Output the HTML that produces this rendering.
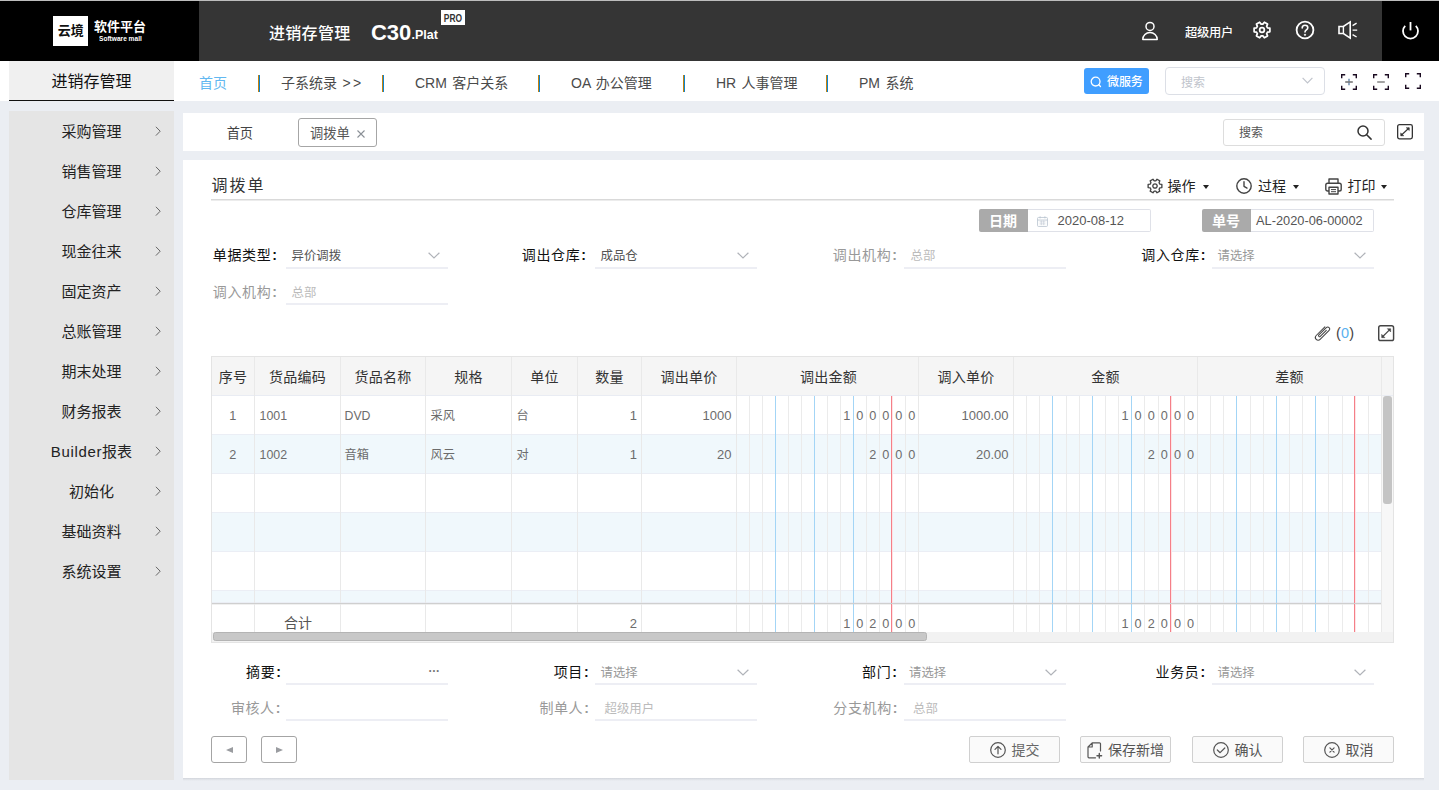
<!DOCTYPE html>
<html lang="zh-CN">
<head>
<meta charset="utf-8">
<title>调拨单</title>
<style>
*{box-sizing:border-box;margin:0;padding:0}
html,body{width:1439px;height:790px;overflow:hidden}
body{background:#ebeef3;font-family:"Liberation Sans","Noto Sans CJK SC",sans-serif;color:#333;position:relative;font-size:13px}
.abs{position:absolute}
.t{position:absolute;white-space:nowrap;line-height:20px;height:20px}
svg{position:absolute;overflow:visible}
/* header */
#hd{position:absolute;left:0;top:0;width:1439px;height:61px;background:#353535}
#hd .logo{position:absolute;left:0;top:0;width:199px;height:61px;background:#000}
#hd .pw{position:absolute;left:1382px;top:0;width:57px;height:61px;background:#000}
/* nav */
#nav{position:absolute;left:0;top:61px;width:1439px;height:40px;background:#fff}
#nav .side{position:absolute;left:9px;top:0;width:165px;height:40px;background:#f0f0f0;border-bottom:1px solid #111}
#nav .it{position:absolute;top:12px;font-size:14px;line-height:20px;color:#4a4a4a;white-space:nowrap;word-spacing:1.500px}
#nav .sp{position:absolute;top:14px;width:2px;height:17px;background:linear-gradient(90deg,#c4820f 50%,#0d84d0 50%)}
/* sidebar */
#sb{position:absolute;left:9px;top:111px;width:165px;height:669px;background:#e5e5e5}
#sb .mi{position:absolute;left:0;width:165px;height:40px;line-height:42px;text-align:center;font-size:15px;color:#222}
#sb .mi svg{left:145.500px;top:14.500px}
/* tab bar */
#tb{position:absolute;left:183px;top:113px;width:1241px;height:38px;background:#fff}
/* panel */
#pn{position:absolute;left:183px;top:160px;width:1241px;height:618px;background:#fff}
#pnsh{position:absolute;left:183px;top:778px;width:1241px;height:3px;background:linear-gradient(#d2d5db,#e3e6eb 60%,#ebeef3)}
</style>
</head>
<body>
<!-- HEADER -->
<div id="hd">
  <div class="logo">
    <div class="abs" style="left:53px;top:16px;width:35px;height:30px;background:#fff"></div>
    <div class="t" style="left:57.700px;top:21.300px;font-size:13px;font-weight:700;color:#111">云境</div>
    <div class="t" style="left:94px;top:17px;font-size:13px;font-weight:700;color:#fff">软件平台</div>
    <div class="t" style="left:98.500px;top:29px;font-size:14px;font-weight:700;color:#fff;transform:scale(.47);transform-origin:0 50%">Software mall</div>
  </div>
  <div class="t" style="left:269px;top:23.500px;font-size:16px;font-weight:500;color:#fff;letter-spacing:.3px">进销存管理</div>
  <div class="t" style="left:371px;top:19.500px;font-size:22px;font-weight:700;color:#fff;line-height:26px;height:26px;letter-spacing:-.1px">C30</div>
  <div class="t" style="left:411.500px;top:25px;font-size:12.500px;font-weight:700;color:#fff">.Plat</div>
  <div class="abs" style="left:441px;top:10px;width:24px;height:15px;background:#fff"></div>
  <div class="t" style="left:435px;top:7.800px;font-size:10.800px;font-weight:700;color:#333;width:36px;text-align:center;transform:scaleX(.78)">PRO</div>
  <svg style="left:1140px;top:20px" width="20" height="22" viewBox="0 0 20 22" fill="none" stroke="#fff" stroke-width="1.500"><circle cx="10" cy="6.400" r="4"/><path d="M2.800 19.400A7.200 7 0 0 1 17.200 19.400Z" stroke-linejoin="round"/></svg>
  <div class="t" style="left:1185px;top:23px;font-size:12.300px;font-weight:500;color:#fff;letter-spacing:-.3px">超级用户</div>
  <svg style="left:1252px;top:20px" width="20" height="20" viewBox="-11.100 -11.100 22.200 22.200" fill="none" stroke="#fff" stroke-width="1.900" stroke-linejoin="round"><path d="M0.96 -6.53 L2.60 -8.62 L6.16 -6.56 L5.17 -4.10 L6.14 -2.43 L8.76 -2.06 L8.76 2.06 L6.14 2.43 L5.17 4.10 L6.16 6.56 L2.60 8.62 L0.96 6.53 L-0.96 6.53 L-2.60 8.62 L-6.16 6.56 L-5.17 4.10 L-6.14 2.43 L-8.76 2.06 L-8.76 -2.06 L-6.14 -2.43 L-5.17 -4.10 L-6.16 -6.56 L-2.60 -8.62 L-0.96 -6.53Z"/><circle cx="0" cy="0" r="2.600"/></svg>
  <svg style="left:1295px;top:20px" width="20" height="20" viewBox="0 0 20 20" fill="none" stroke="#fff" stroke-width="1.800"><circle cx="10" cy="10" r="8.400"/><path d="M7.200 7.900c0-1.700 1.200-2.700 2.800-2.700s2.800 1 2.800 2.500c0 2.100-2.800 2.200-2.800 4.300" stroke-linecap="round" stroke-width="1.600"/><circle cx="10" cy="14.800" r=".7" fill="#fff" stroke-width=".8"/></svg>
  <svg style="left:1337px;top:20px" width="22" height="20" viewBox="0 0 22 20" fill="none" stroke="#fff" stroke-width="1.600" stroke-linejoin="miter"><path d="M2 6.500h4.400l6.800-4.600v16.200l-6.800-4.600H2z"/><path d="M6.400 6.500v7" stroke-width="1.400"/><path d="M15.600 5.600l4-2.400M15.600 10.100h4.600M15.600 14.600l4 2.400" stroke-width="1.400"/></svg>
  <div class="pw">
    <svg style="left:19px;top:20px" width="20" height="21" viewBox="0 0 20 21" fill="none" stroke="#fff" stroke-width="1.800" stroke-linecap="butt"><path d="M9.500 2v8.400"/><path d="M4.200 5.800a7.500 7.500 0 1 0 10.600 0"/></svg>
  </div>
</div>
<div class="abs" style="left:0;top:0;width:1439px;height:1px;background:#bdbdbd"></div>

<!-- TOP NAV -->
<div id="nav">
  <div class="side"><div class="t" style="left:42.500px;top:11px;font-size:16px;color:#111">进销存管理</div></div>
  <div class="it" style="left:199px;color:#62b8f1">首页</div>
  <div class="sp" style="left:258px"></div>
  <div class="it" style="left:281px">子系统录 <span style="letter-spacing:2.500px">&gt;&gt;</span></div>
  <div class="sp" style="left:382px"></div>
  <div class="it" style="left:415px">CRM 客户关系</div>
  <div class="sp" style="left:538px"></div>
  <div class="it" style="left:571px">OA 办公管理</div>
  <div class="sp" style="left:683px"></div>
  <div class="it" style="left:716px">HR 人事管理</div>
  <div class="sp" style="left:826px"></div>
  <div class="it" style="left:859px">PM 系统</div>
  <!-- micro service button -->
  <div class="abs" style="left:1084px;top:7px;width:65px;height:26px;background:#409eff;border-radius:3px"></div>
  <svg style="left:1090px;top:14.500px" width="13" height="13" viewBox="0 0 13 13" fill="none" stroke="#fff" stroke-width="1.300"><circle cx="5.600" cy="5.600" r="4.400"/><path d="M8.800 8.800l1.700 1.700" stroke-linecap="round"/></svg>
  <div class="t" style="left:1107px;top:11px;font-size:12px;font-weight:500;color:#fff;letter-spacing:-.1px">微服务</div>
  <!-- select -->
  <div class="abs" style="left:1165px;top:6px;width:160px;height:28px;border:1px solid #dcdfe6;border-radius:4px;background:#fff"></div>
  <div class="t" style="left:1181px;top:11.500px;font-size:12px;color:#c0c4cc">搜索</div>
  <svg style="left:1302px;top:16px" width="11" height="7" viewBox="0 0 11 7" fill="none" stroke="#c0c4cc" stroke-width="1.200"><path d="M.6.800l4.900 5 4.900-5"/></svg>
  <!-- 3 frame icons -->
  <svg style="left:1341px;top:12.700px" width="16" height="16" viewBox="0 0 16 16" fill="none" stroke="#1a0a20" stroke-width="1.400"><path d="M.7 4.200V.7H4.200M11.800 .7h3.500V4.200M15.300 11.800v3.500H11.800M4.200 15.300H.7V11.800"/><path d="M8 4.800v6.400" stroke="#5b7ea6" stroke-width="1.300"/><path d="M4.200 8h7.600" stroke="#777" stroke-width="1.600"/></svg>
  <svg style="left:1373px;top:12.700px" width="16" height="16" viewBox="0 0 16 16" fill="none" stroke="#1a0a20" stroke-width="1.400"><path d="M.7 4.200V.7H4.200M11.800 .7h3.500V4.200M15.300 11.800v3.500H11.800M4.200 15.300H.7V11.800"/><path d="M4.200 8h7.600" stroke="#999" stroke-width="1.800"/></svg>
  <svg style="left:1405px;top:12px" width="16" height="16" viewBox="0 0 16 16" fill="none" stroke="#1a0a20" stroke-width="1.400"><path d="M.7 4.200V.7H4.200M11.800 .7h3.500V4.200M15.300 11.800v3.500H11.800M4.200 15.300H.7V11.800"/></svg>
</div>

<!-- SIDEBAR -->
<div id="sb">
  <div class="mi" style="top:0">采购管理<svg width="7" height="11" viewBox="0 0 7 11" fill="none" stroke="#666" stroke-width="1"><path d="M.9 .8l4.300 4.400L.9 9.600"/></svg></div>
  <div class="mi" style="top:40px">销售管理<svg width="7" height="11" viewBox="0 0 7 11" fill="none" stroke="#666" stroke-width="1"><path d="M.9 .8l4.300 4.400L.9 9.600"/></svg></div>
  <div class="mi" style="top:80px">仓库管理<svg width="7" height="11" viewBox="0 0 7 11" fill="none" stroke="#666" stroke-width="1"><path d="M.9 .8l4.300 4.400L.9 9.600"/></svg></div>
  <div class="mi" style="top:120px">现金往来<svg width="7" height="11" viewBox="0 0 7 11" fill="none" stroke="#666" stroke-width="1"><path d="M.9 .8l4.300 4.400L.9 9.600"/></svg></div>
  <div class="mi" style="top:160px">固定资产<svg width="7" height="11" viewBox="0 0 7 11" fill="none" stroke="#666" stroke-width="1"><path d="M.9 .8l4.300 4.400L.9 9.600"/></svg></div>
  <div class="mi" style="top:200px">总账管理<svg width="7" height="11" viewBox="0 0 7 11" fill="none" stroke="#666" stroke-width="1"><path d="M.9 .8l4.300 4.400L.9 9.600"/></svg></div>
  <div class="mi" style="top:240px">期末处理<svg width="7" height="11" viewBox="0 0 7 11" fill="none" stroke="#666" stroke-width="1"><path d="M.9 .8l4.300 4.400L.9 9.600"/></svg></div>
  <div class="mi" style="top:280px">财务报表<svg width="7" height="11" viewBox="0 0 7 11" fill="none" stroke="#666" stroke-width="1"><path d="M.9 .8l4.300 4.400L.9 9.600"/></svg></div>
  <div class="mi" style="top:320px"><span style="letter-spacing:.65px">Builder</span>报表<svg width="7" height="11" viewBox="0 0 7 11" fill="none" stroke="#666" stroke-width="1"><path d="M.9 .8l4.300 4.400L.9 9.600"/></svg></div>
  <div class="mi" style="top:360px">初始化<svg width="7" height="11" viewBox="0 0 7 11" fill="none" stroke="#666" stroke-width="1"><path d="M.9 .8l4.300 4.400L.9 9.600"/></svg></div>
  <div class="mi" style="top:400px">基础资料<svg width="7" height="11" viewBox="0 0 7 11" fill="none" stroke="#666" stroke-width="1"><path d="M.9 .8l4.300 4.400L.9 9.600"/></svg></div>
  <div class="mi" style="top:440px">系统设置<svg width="7" height="11" viewBox="0 0 7 11" fill="none" stroke="#666" stroke-width="1"><path d="M.9 .8l4.300 4.400L.9 9.600"/></svg></div>
</div>

<!-- TAB BAR -->
<div id="tb">
  <div class="t" style="left:43.700px;top:10.700px;font-size:13.200px;color:#444">首页</div>
  <div class="abs" style="left:115px;top:5px;width:79px;height:29px;border:1px solid #a6a6a6;border-radius:3px;background:#fff"></div>
  <div class="t" style="left:127px;top:10.600px;font-size:13.300px;color:#555">调拨单</div>
  <svg style="left:174px;top:17px" width="8" height="8" viewBox="0 0 8 8" fill="none" stroke="#8a8f96" stroke-width="1.100"><path d="M.5.500l7 7M7.500.500l-7 7"/></svg>
  <div class="abs" style="left:1040px;top:6px;width:162px;height:27px;border:1px solid #ddd;border-radius:3px;background:#fff"></div>
  <div class="t" style="left:1056px;top:10px;font-size:12px;color:#555">搜索</div>
  <svg style="left:1174px;top:11.800px" width="15" height="15" viewBox="0 0 15 15" fill="none" stroke="#333" stroke-width="1.500"><circle cx="6" cy="6" r="5"/><path d="M9.700 9.700l4.400 4.400" stroke-linecap="round"/></svg>
  <svg style="left:1214px;top:11.200px" width="16" height="15.500" viewBox="0 0 16 15.500" fill="none" stroke="#333" stroke-width="1.300"><rect x=".65" y=".65" width="14.700" height="14.200" rx="1.800"/><path d="M4 11.500l8-7.500" stroke-width="1.100"/><path d="M9.200 3.700h3.100v2.900zM6.800 11.800H3.700V8.900z" fill="#333" stroke-width=".5"/></svg>
</div>

<!-- PANEL -->
<div id="pnsh"></div>
<div id="pn">
<div class="t" style="top:16px;font-size:16px;color:#333;left:28.5px;letter-spacing:2px;">调拨单</div>
<div class="abs" style="left:28px;top:39px;width:1183px;height:1px;background:#d9d9d9"></div>
<div class="abs" style="left:28px;top:40px;width:1183px;height:1px;background:#ececec"></div>
<svg style="left:964px;top:17.8px" width="16" height="16" viewBox="-10.200 -10.200 20.400 20.400" fill="none" stroke="#444" stroke-width="1.700" stroke-linejoin="round"><path d="M0.96 -6.53 L2.60 -8.62 L6.16 -6.56 L5.17 -4.10 L6.14 -2.43 L8.76 -2.06 L8.76 2.06 L6.14 2.43 L5.17 4.10 L6.16 6.56 L2.60 8.62 L0.96 6.53 L-0.96 6.53 L-2.60 8.62 L-6.16 6.56 L-5.17 4.10 L-6.14 2.43 L-8.76 2.06 L-8.76 -2.06 L-6.14 -2.43 L-5.17 -4.10 L-6.16 -6.56 L-2.60 -8.62 L-0.96 -6.53Z"/><circle cx="0" cy="0" r="2.800"/></svg>
<div class="t" style="top:16px;font-size:14px;color:#222;left:984.5px;">操作</div>
<div class="abs" style="left:1019.5px;top:24.5px;border:3.500px solid transparent;border-top:4.500px solid #222;border-bottom:0;width:0;height:0"></div>
<svg style="left:1052.8px;top:17.8px" width="16" height="16" viewBox="0 0 16 16" fill="none" stroke="#444" stroke-width="1.400"><circle cx="8" cy="8" r="7.200"/><path d="M8 3.800V8.300l3 1.800" stroke-linecap="round" stroke-linejoin="round"/></svg>
<div class="t" style="top:16px;font-size:14px;color:#222;left:1075px;">过程</div>
<div class="abs" style="left:1109.5px;top:24.5px;border:3.500px solid transparent;border-top:4.500px solid #222;border-bottom:0;width:0;height:0"></div>
<svg style="left:1141.5px;top:17.8px" width="17" height="17" viewBox="0 0 17 17" fill="none" stroke="#444" stroke-width="1.400" stroke-linejoin="round"><path d="M4 5.200V1h9V5.200"/><rect x=".8" y="5.200" width="15.400" height="7.800" rx="1.800"/><rect x="4" y="9.200" width="9" height="6.800" fill="#fff"/><path d="M6 11.600h5M6 13.700h5" stroke-width="1"/></svg>
<div class="t" style="top:16px;font-size:14px;color:#222;left:1164.5px;">打印</div>
<div class="abs" style="left:1198px;top:24.5px;border:3.500px solid transparent;border-top:4.500px solid #222;border-bottom:0;width:0;height:0"></div>
<div class="abs" style="left:796px;top:49px;width:49px;height:23px;background:#aaa;border-radius:2px 0 0 2px"></div>
<div class="t" style="top:50.5px;font-size:14px;color:#fff;font-weight:700;left:670px;width:300px;text-align:center;">日期</div>
<div class="abs" style="left:845px;top:49px;width:123px;height:23px;border:1px solid #dfe1e8;border-left:0;background:#fff;border-radius:0 2px 2px 0"></div>
<svg style="left:854px;top:55.5px" width="11" height="11" viewBox="0 0 12 12" fill="none" stroke="#b9c3d0" stroke-width=".9"><rect x=".6" y="1.600" width="10.800" height="9.800" rx="1"/><path d="M.6 4.400h10.800M3.400.4v2.200M8.600.4v2.200" /><path d="M2.800 6.400h6.400M2.800 8.600h6.400M4.700 5v5M7.300 5v5" stroke-width=".6"/></svg>
<div class="t" style="top:51.2px;font-size:13px;color:#555;left:874.5px;">2020-08-12</div>
<div class="abs" style="left:1019px;top:49px;width:49px;height:23px;background:#aaa;border-radius:2px 0 0 2px"></div>
<div class="t" style="top:50.5px;font-size:14px;color:#fff;font-weight:700;left:893px;width:300px;text-align:center;">单号</div>
<div class="abs" style="left:1068px;top:49px;width:123px;height:23px;border:1px solid #dfe1e8;border-left:0;background:#fff;border-radius:0 2px 2px 0"></div>
<div class="t" style="top:51.2px;font-size:12.8px;color:#555;left:1073px;">AL-2020-06-00002</div>
<div class="t" style="top:85px;font-size:14px;color:#111;left:-205.5px;width:300px;text-align:right;letter-spacing:.6px;">单据类型<span style="margin-left:1px;font-weight:700">:</span></div>
<div class="abs" style="left:103px;top:107px;width:162px;height:2px;background:#edeef4"></div>
<div class="t" style="top:86px;font-size:12.4px;color:#555;left:108.5px;">异价调拨</div>
<svg style="left:244.5px;top:92px" width="12" height="7" viewBox="0 0 12 7" fill="none" stroke="#b0b3b9" stroke-width="1.200"><path d="M.6.700l5.400 5.300 5.400-5.300"/></svg>
<div class="t" style="top:85px;font-size:14px;color:#111;left:103.5px;width:300px;text-align:right;letter-spacing:.6px;">调出仓库<span style="margin-left:1px;font-weight:700">:</span></div>
<div class="abs" style="left:412px;top:107px;width:162px;height:2px;background:#edeef4"></div>
<div class="t" style="top:86px;font-size:12.4px;color:#555;left:417.5px;">成品仓</div>
<svg style="left:553.5px;top:92px" width="12" height="7" viewBox="0 0 12 7" fill="none" stroke="#b0b3b9" stroke-width="1.200"><path d="M.6.700l5.400 5.300 5.400-5.300"/></svg>
<div class="t" style="top:85px;font-size:14px;color:#999;left:414.5px;width:300px;text-align:right;letter-spacing:.6px;">调出机构<span style="margin-left:1px;font-weight:700">:</span></div>
<div class="abs" style="left:720.5px;top:107px;width:162px;height:2px;background:#edeef4"></div>
<div class="t" style="top:86px;font-size:12.4px;color:#bbb;left:727.5px;">总部</div>
<div class="t" style="top:85px;font-size:14px;color:#111;left:723.0px;width:300px;text-align:right;letter-spacing:.6px;">调入仓库<span style="margin-left:1px;font-weight:700">:</span></div>
<div class="abs" style="left:1029px;top:107px;width:162px;height:2px;background:#edeef4"></div>
<div class="t" style="top:86px;font-size:12.4px;color:#999;left:1034.5px;">请选择</div>
<svg style="left:1170.5px;top:92px" width="12" height="7" viewBox="0 0 12 7" fill="none" stroke="#b0b3b9" stroke-width="1.200"><path d="M.6.700l5.400 5.300 5.400-5.300"/></svg>
<div class="t" style="top:122px;font-size:14px;color:#999;left:-205.5px;width:300px;text-align:right;letter-spacing:.6px;">调入机构<span style="margin-left:1px;font-weight:700">:</span></div>
<div class="abs" style="left:103px;top:143px;width:162px;height:2px;background:#edeef4"></div>
<div class="t" style="top:123px;font-size:12.4px;color:#bbb;left:108.5px;">总部</div>
<svg style="left:1130px;top:164px" width="19" height="19" viewBox="0 0 19 19" fill="none" stroke="#444" stroke-width="1.050"><g transform="translate(9.400 9.200) rotate(-45) translate(-9.250 -3.250)"><path d="M15.500 .5H3.250A2.750 2.750 0 0 0 3.250 6H16A2 2 0 0 0 16 2H5.500A1 1 0 0 0 5.500 4H14" stroke-linecap="round"/></g></svg>
<div class="t" style="top:162.5px;font-size:14.5px;color:#444;left:1153px;letter-spacing:.2px;">(<span style="color:#5ab1ef">0</span>)</div>
<svg style="left:1194.7px;top:165.2px" width="16.3" height="16.3" viewBox="0 0 17 17" fill="none" stroke="#444" stroke-width="1.500"><rect x=".75" y=".75" width="15.500" height="15.500" rx="2"/><path d="M4.500 12.500l8-8" stroke-width="1.200"/><path d="M9.700 3.800h3.500v3.500zM7.300 13.200H3.800V9.700z" fill="#444" stroke-width=".5"/></svg>
<div class="abs" style="left:28px;top:196px;width:1183px;height:287px;border:1px solid #e4e4e4;background:#fff"></div>
<div class="abs" style="left:29px;top:197px;width:1181px;height:39px;background:#f5f5f5"></div>
<div class="abs" style="left:29px;top:236px;width:1169px;height:39px;background:#fff;border-bottom:1px solid #ebeef5"></div>
<div class="abs" style="left:29px;top:275px;width:1169px;height:39px;background:#f0f8fc;border-bottom:1px solid #ebeef5"></div>
<div class="abs" style="left:29px;top:314px;width:1169px;height:39px;background:#fff;border-bottom:1px solid #ebeef5"></div>
<div class="abs" style="left:29px;top:353px;width:1169px;height:39px;background:#f0f8fc;border-bottom:1px solid #ebeef5"></div>
<div class="abs" style="left:29px;top:392px;width:1169px;height:39px;background:#fff;border-bottom:1px solid #ebeef5"></div>
<div class="abs" style="left:29px;top:431px;width:1169px;height:12px;background:#f0f8fc;border-bottom:1px solid #ebeef5"></div>
<div class="abs" style="left:29px;top:235px;width:1181px;height:1px;background:#e9ecf3"></div>
<div class="abs" style="left:1199px;top:236px;width:11px;height:236px;background:#f7f7f7"></div>
<div class="abs" style="left:1200.3px;top:236.3px;width:9px;height:108px;background:#c4c4c4;border-radius:3px"></div>
<div class="abs" style="left:29px;top:443px;width:1169px;height:2px;background:#f0f0f0"></div>
<div class="abs" style="left:29px;top:445px;width:1169px;height:27px;background:#fff"></div>
<div class="abs" style="left:71px;top:197px;width:1px;height:275px;background:#e9e9e9"></div>
<div class="abs" style="left:157px;top:197px;width:1px;height:275px;background:#e9e9e9"></div>
<div class="abs" style="left:242px;top:197px;width:1px;height:275px;background:#e9e9e9"></div>
<div class="abs" style="left:328px;top:197px;width:1px;height:275px;background:#e9e9e9"></div>
<div class="abs" style="left:394px;top:197px;width:1px;height:275px;background:#e9e9e9"></div>
<div class="abs" style="left:458px;top:197px;width:1px;height:275px;background:#e9e9e9"></div>
<div class="abs" style="left:553px;top:197px;width:1px;height:275px;background:#e9e9e9"></div>
<div class="abs" style="left:735px;top:197px;width:1px;height:275px;background:#e9e9e9"></div>
<div class="abs" style="left:830px;top:197px;width:1px;height:275px;background:#e9e9e9"></div>
<div class="abs" style="left:1014px;top:197px;width:1px;height:275px;background:#e9e9e9"></div>
<div class="abs" style="left:1198px;top:197px;width:1px;height:275px;background:#e9e9e9"></div>
<div class="abs" style="left:566px;top:236px;width:1px;height:236px;background:#ebebeb"></div>
<div class="abs" style="left:579px;top:236px;width:1px;height:236px;background:#ebebeb"></div>
<div class="abs" style="left:592px;top:236px;width:1px;height:236px;background:#a3d5f6"></div>
<div class="abs" style="left:605px;top:236px;width:1px;height:236px;background:#ebebeb"></div>
<div class="abs" style="left:618px;top:236px;width:1px;height:236px;background:#ebebeb"></div>
<div class="abs" style="left:631px;top:236px;width:1px;height:236px;background:#a3d5f6"></div>
<div class="abs" style="left:644px;top:236px;width:1px;height:236px;background:#ebebeb"></div>
<div class="abs" style="left:657px;top:236px;width:1px;height:236px;background:#ebebeb"></div>
<div class="abs" style="left:670px;top:236px;width:1px;height:236px;background:#a3d5f6"></div>
<div class="abs" style="left:683px;top:236px;width:1px;height:236px;background:#ebebeb"></div>
<div class="abs" style="left:696px;top:236px;width:1px;height:236px;background:#ebebeb"></div>
<div class="abs" style="left:708px;top:236px;width:1px;height:236px;background:#f57f88"></div>
<div class="abs" style="left:709px;top:236px;width:1px;height:236px;background:#fde4e6"></div>
<div class="abs" style="left:722px;top:236px;width:1px;height:236px;background:#ebebeb"></div>
<div class="abs" style="left:843px;top:236px;width:1px;height:236px;background:#ebebeb"></div>
<div class="abs" style="left:856px;top:236px;width:1px;height:236px;background:#ebebeb"></div>
<div class="abs" style="left:869px;top:236px;width:1px;height:236px;background:#a3d5f6"></div>
<div class="abs" style="left:883px;top:236px;width:1px;height:236px;background:#ebebeb"></div>
<div class="abs" style="left:896px;top:236px;width:1px;height:236px;background:#ebebeb"></div>
<div class="abs" style="left:909px;top:236px;width:1px;height:236px;background:#a3d5f6"></div>
<div class="abs" style="left:922px;top:236px;width:1px;height:236px;background:#ebebeb"></div>
<div class="abs" style="left:935px;top:236px;width:1px;height:236px;background:#ebebeb"></div>
<div class="abs" style="left:948px;top:236px;width:1px;height:236px;background:#a3d5f6"></div>
<div class="abs" style="left:961px;top:236px;width:1px;height:236px;background:#ebebeb"></div>
<div class="abs" style="left:975px;top:236px;width:1px;height:236px;background:#ebebeb"></div>
<div class="abs" style="left:987px;top:236px;width:1px;height:236px;background:#f57f88"></div>
<div class="abs" style="left:988px;top:236px;width:1px;height:236px;background:#fde4e6"></div>
<div class="abs" style="left:1001px;top:236px;width:1px;height:236px;background:#ebebeb"></div>
<div class="abs" style="left:1027px;top:236px;width:1px;height:236px;background:#ebebeb"></div>
<div class="abs" style="left:1040px;top:236px;width:1px;height:236px;background:#ebebeb"></div>
<div class="abs" style="left:1053px;top:236px;width:1px;height:236px;background:#a3d5f6"></div>
<div class="abs" style="left:1067px;top:236px;width:1px;height:236px;background:#ebebeb"></div>
<div class="abs" style="left:1080px;top:236px;width:1px;height:236px;background:#ebebeb"></div>
<div class="abs" style="left:1093px;top:236px;width:1px;height:236px;background:#a3d5f6"></div>
<div class="abs" style="left:1106px;top:236px;width:1px;height:236px;background:#ebebeb"></div>
<div class="abs" style="left:1119px;top:236px;width:1px;height:236px;background:#ebebeb"></div>
<div class="abs" style="left:1132px;top:236px;width:1px;height:236px;background:#a3d5f6"></div>
<div class="abs" style="left:1145px;top:236px;width:1px;height:236px;background:#ebebeb"></div>
<div class="abs" style="left:1159px;top:236px;width:1px;height:236px;background:#ebebeb"></div>
<div class="abs" style="left:1171px;top:236px;width:1px;height:236px;background:#f57f88"></div>
<div class="abs" style="left:1172px;top:236px;width:1px;height:236px;background:#fde4e6"></div>
<div class="abs" style="left:1185px;top:236px;width:1px;height:236px;background:#ebebeb"></div>
<div class="abs" style="left:29px;top:443px;width:1169px;height:1px;background:#cfcfcf"></div>
<div class="t" style="top:207px;font-size:14px;color:#333;left:-100.0px;width:300px;text-align:center;letter-spacing:.3px;">序号</div>
<div class="t" style="top:207px;font-size:14px;color:#333;left:-35.5px;width:300px;text-align:center;letter-spacing:.3px;">货品编码</div>
<div class="t" style="top:207px;font-size:14px;color:#333;left:50.0px;width:300px;text-align:center;letter-spacing:.3px;">货品名称</div>
<div class="t" style="top:207px;font-size:14px;color:#333;left:135.5px;width:300px;text-align:center;letter-spacing:.3px;">规格</div>
<div class="t" style="top:207px;font-size:14px;color:#333;left:211.5px;width:300px;text-align:center;letter-spacing:.3px;">单位</div>
<div class="t" style="top:207px;font-size:14px;color:#333;left:276.5px;width:300px;text-align:center;letter-spacing:.3px;">数量</div>
<div class="t" style="top:207px;font-size:14px;color:#333;left:356.0px;width:300px;text-align:center;letter-spacing:.3px;">调出单价</div>
<div class="t" style="top:207px;font-size:14px;color:#333;left:495.5px;width:300px;text-align:center;letter-spacing:.3px;">调出金额</div>
<div class="t" style="top:207px;font-size:14px;color:#333;left:633.0px;width:300px;text-align:center;letter-spacing:.3px;">调入单价</div>
<div class="t" style="top:207px;font-size:14px;color:#333;left:772.5px;width:300px;text-align:center;letter-spacing:.3px;">金额</div>
<div class="t" style="top:207px;font-size:14px;color:#333;left:956.5px;width:300px;text-align:center;letter-spacing:.3px;">差额</div>
<div class="t" style="top:246px;font-size:12.7px;color:#6c6c6c;left:-100.3px;width:300px;text-align:center;">1</div>
<div class="t" style="top:246px;font-size:12.4px;color:#6c6c6c;left:76.5px;">1001</div>
<div class="t" style="top:246px;font-size:12.3px;color:#6c6c6c;left:161.5px;">DVD</div>
<div class="t" style="top:246px;font-size:12.2px;color:#6c6c6c;left:247.5px;">采风</div>
<div class="t" style="top:246px;font-size:12.2px;color:#6c6c6c;left:333.5px;">台</div>
<div class="t" style="top:246px;font-size:13px;color:#6c6c6c;left:154px;width:300px;text-align:right;">1</div>
<div class="t" style="top:246px;font-size:13px;color:#6c6c6c;left:248.5px;width:300px;text-align:right;">1000</div>
<div class="t" style="top:246px;font-size:12.7px;color:#6c6c6c;left:513.7px;width:300px;text-align:center;">1</div>
<div class="t" style="top:246px;font-size:12.7px;color:#6c6c6c;left:526.7px;width:300px;text-align:center;">0</div>
<div class="t" style="top:246px;font-size:12.7px;color:#6c6c6c;left:539.7px;width:300px;text-align:center;">0</div>
<div class="t" style="top:246px;font-size:12.7px;color:#6c6c6c;left:552.7px;width:300px;text-align:center;">0</div>
<div class="t" style="top:246px;font-size:12.7px;color:#6c6c6c;left:565.7px;width:300px;text-align:center;">0</div>
<div class="t" style="top:246px;font-size:12.7px;color:#6c6c6c;left:578.7px;width:300px;text-align:center;">0</div>
<div class="t" style="top:246px;font-size:13px;color:#6c6c6c;left:525.5px;width:300px;text-align:right;">1000.00</div>
<div class="t" style="top:246px;font-size:12.7px;color:#6c6c6c;left:791.92px;width:300px;text-align:center;">1</div>
<div class="t" style="top:246px;font-size:12.7px;color:#6c6c6c;left:805.06px;width:300px;text-align:center;">0</div>
<div class="t" style="top:246px;font-size:12.7px;color:#6c6c6c;left:818.2px;width:300px;text-align:center;">0</div>
<div class="t" style="top:246px;font-size:12.7px;color:#6c6c6c;left:831.34px;width:300px;text-align:center;">0</div>
<div class="t" style="top:246px;font-size:12.7px;color:#6c6c6c;left:844.49px;width:300px;text-align:center;">0</div>
<div class="t" style="top:246px;font-size:12.7px;color:#6c6c6c;left:857.63px;width:300px;text-align:center;">0</div>
<div class="t" style="top:285px;font-size:12.7px;color:#6c6c6c;left:-100.3px;width:300px;text-align:center;">2</div>
<div class="t" style="top:285px;font-size:12.4px;color:#6c6c6c;left:76.5px;">1002</div>
<div class="t" style="top:285px;font-size:12.2px;color:#6c6c6c;left:161.5px;">音箱</div>
<div class="t" style="top:285px;font-size:12.2px;color:#6c6c6c;left:247.5px;">风云</div>
<div class="t" style="top:285px;font-size:12.2px;color:#6c6c6c;left:333.5px;">对</div>
<div class="t" style="top:285px;font-size:13px;color:#6c6c6c;left:154px;width:300px;text-align:right;">1</div>
<div class="t" style="top:285px;font-size:13px;color:#6c6c6c;left:248.5px;width:300px;text-align:right;">20</div>
<div class="t" style="top:285px;font-size:12.7px;color:#6c6c6c;left:539.7px;width:300px;text-align:center;">2</div>
<div class="t" style="top:285px;font-size:12.7px;color:#6c6c6c;left:552.7px;width:300px;text-align:center;">0</div>
<div class="t" style="top:285px;font-size:12.7px;color:#6c6c6c;left:565.7px;width:300px;text-align:center;">0</div>
<div class="t" style="top:285px;font-size:12.7px;color:#6c6c6c;left:578.7px;width:300px;text-align:center;">0</div>
<div class="t" style="top:285px;font-size:13px;color:#6c6c6c;left:525.5px;width:300px;text-align:right;">20.00</div>
<div class="t" style="top:285px;font-size:12.7px;color:#6c6c6c;left:818.2px;width:300px;text-align:center;">2</div>
<div class="t" style="top:285px;font-size:12.7px;color:#6c6c6c;left:831.34px;width:300px;text-align:center;">0</div>
<div class="t" style="top:285px;font-size:12.7px;color:#6c6c6c;left:844.49px;width:300px;text-align:center;">0</div>
<div class="t" style="top:285px;font-size:12.7px;color:#6c6c6c;left:857.63px;width:300px;text-align:center;">0</div>
<div class="t" style="top:453px;font-size:14px;color:#555;left:-35px;width:300px;text-align:center;">合计</div>
<div class="t" style="top:454px;font-size:13px;color:#6c6c6c;left:154px;width:300px;text-align:right;">2</div>
<div class="t" style="top:454px;font-size:12.7px;color:#6c6c6c;left:513.7px;width:300px;text-align:center;">1</div>
<div class="t" style="top:454px;font-size:12.7px;color:#6c6c6c;left:526.7px;width:300px;text-align:center;">0</div>
<div class="t" style="top:454px;font-size:12.7px;color:#6c6c6c;left:539.7px;width:300px;text-align:center;">2</div>
<div class="t" style="top:454px;font-size:12.7px;color:#6c6c6c;left:552.7px;width:300px;text-align:center;">0</div>
<div class="t" style="top:454px;font-size:12.7px;color:#6c6c6c;left:565.7px;width:300px;text-align:center;">0</div>
<div class="t" style="top:454px;font-size:12.7px;color:#6c6c6c;left:578.7px;width:300px;text-align:center;">0</div>
<div class="t" style="top:454px;font-size:12.7px;color:#6c6c6c;left:791.92px;width:300px;text-align:center;">1</div>
<div class="t" style="top:454px;font-size:12.7px;color:#6c6c6c;left:805.06px;width:300px;text-align:center;">0</div>
<div class="t" style="top:454px;font-size:12.7px;color:#6c6c6c;left:818.2px;width:300px;text-align:center;">2</div>
<div class="t" style="top:454px;font-size:12.7px;color:#6c6c6c;left:831.34px;width:300px;text-align:center;">0</div>
<div class="t" style="top:454px;font-size:12.7px;color:#6c6c6c;left:844.49px;width:300px;text-align:center;">0</div>
<div class="t" style="top:454px;font-size:12.7px;color:#6c6c6c;left:857.63px;width:300px;text-align:center;">0</div>
<div class="abs" style="left:29px;top:472px;width:1181px;height:10px;background:#f2f2f2"></div>
<div class="abs" style="left:30px;top:472px;width:714px;height:9px;background:#c8c8c8;border:1px solid #b4b4b4;border-radius:2.500px"></div>
<div class="t" style="top:501.5px;font-size:14px;color:#111;left:-201.5px;width:300px;text-align:right;letter-spacing:.6px;">摘要<span style="margin-left:1px;font-weight:700">:</span></div>
<div class="abs" style="left:103px;top:523px;width:162px;height:2px;background:#edeef4"></div>
<div class="t" style="top:500.5px;font-size:12px;color:#777;font-weight:700;left:245.5px;letter-spacing:-.3px;">···</div>
<div class="t" style="top:501.5px;font-size:14px;color:#111;left:106.2px;width:300px;text-align:right;letter-spacing:.6px;">项目<span style="margin-left:1px;font-weight:700">:</span></div>
<div class="abs" style="left:412px;top:523px;width:162px;height:2px;background:#edeef4"></div>
<div class="t" style="top:502.5px;font-size:12.4px;color:#999;left:417.5px;">请选择</div>
<svg style="left:553.5px;top:508.5px" width="12" height="7" viewBox="0 0 12 7" fill="none" stroke="#b0b3b9" stroke-width="1.200"><path d="M.6.700l5.400 5.300 5.400-5.300"/></svg>
<div class="t" style="top:501.5px;font-size:14px;color:#111;left:414.5px;width:300px;text-align:right;letter-spacing:.6px;">部门<span style="margin-left:1px;font-weight:700">:</span></div>
<div class="abs" style="left:720.5px;top:523px;width:162px;height:2px;background:#edeef4"></div>
<div class="t" style="top:502.5px;font-size:12.4px;color:#999;left:726.0px;">请选择</div>
<svg style="left:862.0px;top:508.5px" width="12" height="7" viewBox="0 0 12 7" fill="none" stroke="#b0b3b9" stroke-width="1.200"><path d="M.6.700l5.400 5.300 5.400-5.300"/></svg>
<div class="t" style="top:501.5px;font-size:14px;color:#111;left:722.7px;width:300px;text-align:right;letter-spacing:.6px;">业务员<span style="margin-left:1px;font-weight:700">:</span></div>
<div class="abs" style="left:1029px;top:523px;width:162px;height:2px;background:#edeef4"></div>
<div class="t" style="top:502.5px;font-size:12.4px;color:#999;left:1034.5px;">请选择</div>
<svg style="left:1170.5px;top:508.5px" width="12" height="7" viewBox="0 0 12 7" fill="none" stroke="#b0b3b9" stroke-width="1.200"><path d="M.6.700l5.400 5.300 5.400-5.300"/></svg>
<div class="t" style="top:538px;font-size:14px;color:#999;left:-202.0px;width:300px;text-align:right;letter-spacing:.6px;">审核人<span style="margin-left:1px;font-weight:700">:</span></div>
<div class="abs" style="left:103px;top:559px;width:162px;height:2px;background:#edeef4"></div>
<div class="t" style="top:538px;font-size:14px;color:#999;left:106.5px;width:300px;text-align:right;letter-spacing:.6px;">制单人<span style="margin-left:1px;font-weight:700">:</span></div>
<div class="abs" style="left:412px;top:559px;width:162px;height:2px;background:#edeef4"></div>
<div class="t" style="top:539px;font-size:12.4px;color:#bbb;left:421.5px;">超级用户</div>
<div class="t" style="top:538px;font-size:14px;color:#999;left:415.0px;width:300px;text-align:right;letter-spacing:.6px;">分支机构<span style="margin-left:1px;font-weight:700">:</span></div>
<div class="abs" style="left:720.5px;top:559px;width:162px;height:2px;background:#edeef4"></div>
<div class="t" style="top:539px;font-size:12.4px;color:#bbb;left:730.0px;">总部</div>
<div class="abs" style="left:28px;top:576px;width:36px;height:27px;border:1px solid #a4a4a4;border-radius:3px;background:#fff"></div>
<div class="abs" style="left:43.3px;top:586.6px;border:3.800px solid transparent;border-right:7.200px solid #9a9ca0;border-left:0;width:0;height:0"></div>
<div class="abs" style="left:78px;top:576px;width:36px;height:27px;border:1px solid #a4a4a4;border-radius:3px;background:#fff"></div>
<div class="abs" style="left:93px;top:586.6px;border:3.800px solid transparent;border-left:7.200px solid #9a9ca0;border-right:0;width:0;height:0"></div>
<div class="abs" style="left:786px;top:576px;width:91px;height:27px;border:1px solid #d0d0d0;border-radius:2px;background:#fafafa"></div>
<div class="abs" style="left:897px;top:576px;width:91px;height:27px;border:1px solid #d0d0d0;border-radius:2px;background:#fafafa"></div>
<div class="abs" style="left:1008.5px;top:576px;width:91px;height:27px;border:1px solid #d0d0d0;border-radius:2px;background:#fafafa"></div>
<div class="abs" style="left:1120px;top:576px;width:91px;height:27px;border:1px solid #d0d0d0;border-radius:2px;background:#fafafa"></div>
<svg style="left:807px;top:582px" width="16" height="16" viewBox="0 0 16 16" fill="none" stroke="#555" stroke-width="1.200" stroke-linecap="round" stroke-linejoin="round"><circle cx="8" cy="8" r="7.300"/><path d="M8 11.800V4.600M5 7.400l3-3 3 3"/></svg>
<div class="t" style="top:580px;font-size:14px;color:#666;left:828.5px;">提交</div>
<svg style="left:904px;top:581.5px" width="16" height="17" viewBox="0 0 16 17" fill="none" stroke="#555" stroke-width="1.200" stroke-linecap="round" stroke-linejoin="round"><path d="M13.500 9V1.800a1 1 0 0 0-1-1H5.200L1 5v9.800a1 1 0 0 0 1 1h6.500M5.200.8V5H1"/><path d="M12.300 11.500v4.600M10 13.800h4.600" stroke-width="1.400"/></svg>
<div class="t" style="top:580px;font-size:14px;color:#555;left:925px;">保存新增</div>
<svg style="left:1030px;top:582px" width="16" height="16" viewBox="0 0 16 16" fill="none" stroke="#555" stroke-width="1.200" stroke-linecap="round" stroke-linejoin="round"><circle cx="8" cy="8" r="7.300"/><path d="M4.300 8l2.800 2.700 4.700-4.700"/></svg>
<div class="t" style="top:580px;font-size:14px;color:#555;left:1051.5px;">确认</div>
<svg style="left:1141px;top:582px" width="16" height="16" viewBox="0 0 16 16" fill="none" stroke="#555" stroke-width="1.200" stroke-linecap="round" stroke-linejoin="round"><circle cx="8" cy="8" r="7.300"/><path d="M5.900 5.900l4.200 4.200M10.100 5.900l-4.200 4.200"/></svg>
<div class="t" style="top:580px;font-size:14px;color:#555;left:1162.5px;">取消</div>
</div>
</body>
</html>
